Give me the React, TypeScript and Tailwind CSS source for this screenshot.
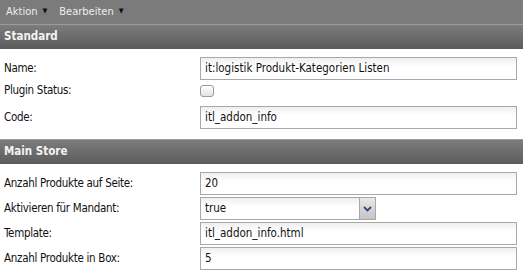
import { useState } from 'react';

function Caret() {
  return <span className="ml-[5px] inline-block text-[7px] leading-none text-[#111] align-middle">▼</span>;
}

function Header({ title }: { title: string }) {
  return (
    <div className="h-[25px] flex items-center px-[4px] border-t border-[#9c9c9c] bg-gradient-to-b from-[#7c7c7c] to-[#5c5c5c]">
      <span className="font-bold text-[11.5px] text-[#f4f4f4]">{title}</span>
    </div>
  );
}

function Row({ label, children, className = '' }: { label: string; children: React.ReactNode; className?: string }) {
  return (
    <div className={`h-[25px] flex items-center ${className}`}>
      <span className="w-[200px] pl-[4px] text-[11.5px] tracking-[-0.3px] text-[#111]">{label}</span>
      <div className="flex-1 pr-[6px] flex items-center">{children}</div>
    </div>
  );
}

function TextBox({ value }: { value: string }) {
  return (
    <div className="w-full h-[23px] flex items-center px-[4px] border border-[#a8a8a8] bg-gradient-to-b from-[#efefef] to-white to-40% text-[11.5px] text-[#111]">
      {value}
    </div>
  );
}

export default function App() {
  const [checked, setChecked] = useState(false);

  return (
    <div className="w-[523px] h-[277px] bg-white overflow-hidden font-['DejaVu_Sans_Condensed','DejaVu_Sans',sans-serif] font-stretch-condensed">
      {/* Top bar */}
      <div className="h-[24px] bg-[#7b7b7b] flex items-center px-[6px] gap-[12px] text-[11px] text-[#eeeeee]">
        <span>Aktion<Caret /></span>
        <span>Bearbeiten<Caret /></span>
      </div>

      <Header title="Standard" />
      <div className="pt-[7px] pb-[9px]">
        <Row label="Name:">
          <TextBox value="it:logistik Produkt-Kategorien Listen" />
        </Row>
        <div className="h-[20px] flex items-center">
          <span className="w-[200px] pl-[4px] text-[11.5px] tracking-[-0.3px] text-[#111]">Plugin Status:</span>
          <button
            onClick={() => setChecked(!checked)}
            className="w-[14px] h-[12px] rounded-[3px] border border-[#9a9a9a] bg-gradient-to-b from-white to-[#e2e2e2]"
          />
        </div>
        <Row label="Code:" className="mt-[4px]">
          <TextBox value="itl_addon_info" />
        </Row>
      </div>

      <Header title="Main Store" />
      <div className="pt-[7px]">
        <Row label="Anzahl Produkte auf Seite:">
          <TextBox value="20" />
        </Row>
        <Row label="Aktivieren für Mandant:">
          <div className="w-[176px] h-[23px] flex border border-[#a8a8a8]">
            <div className="flex-1 flex items-center px-[4px] bg-gradient-to-b from-[#efefef] to-white to-40% text-[11.5px] text-[#111]">true</div>
            <div className="w-[16px] flex items-center justify-center border-l border-[#a8a8a8] bg-gradient-to-b from-[#e8e8e8] to-[#c4c4c4]">
              <svg width="9" height="6" viewBox="0 0 9 6">
                <path d="M1 1 L4.5 4.5 L8 1" fill="none" stroke="#2c4a7c" strokeWidth="1.8" />
              </svg>
            </div>
          </div>
        </Row>
        <Row label="Template:">
          <TextBox value="itl_addon_info.html" />
        </Row>
        <Row label="Anzahl Produkte in Box:">
          <TextBox value="5" />
        </Row>
      </div>
    </div>
  );
}
